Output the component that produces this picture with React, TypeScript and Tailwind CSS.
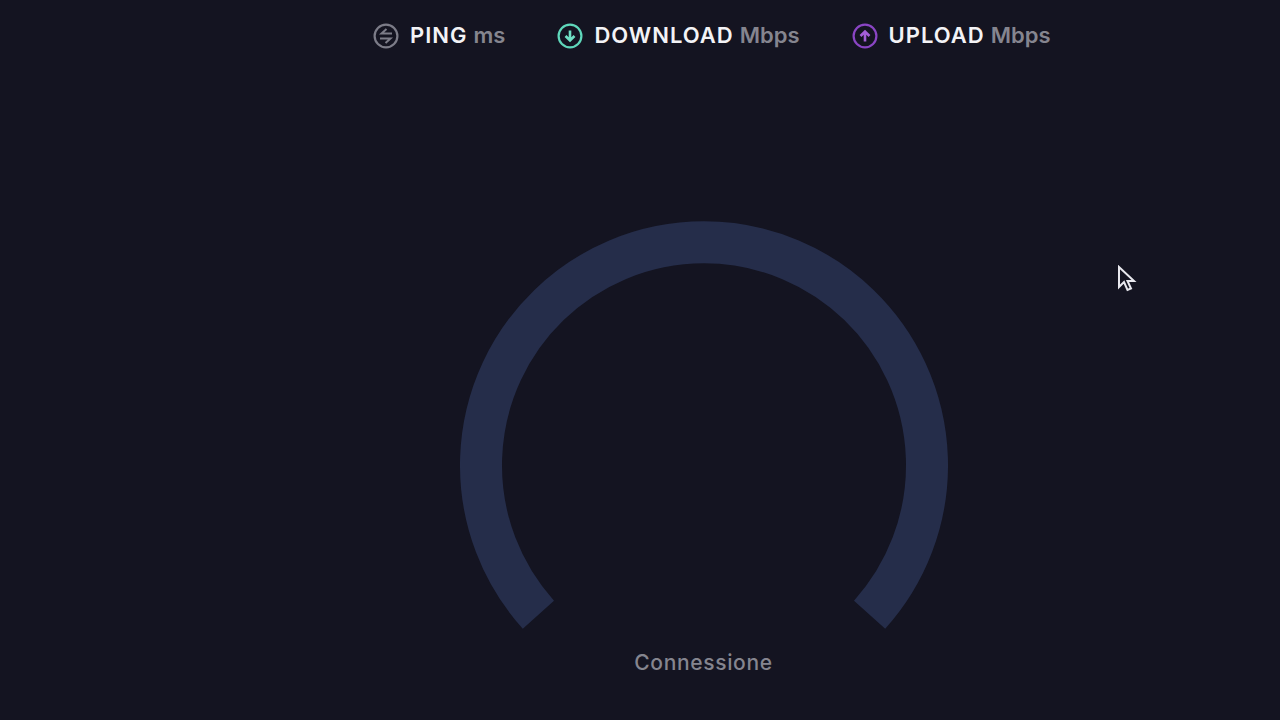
const font = "font-['Inter','Noto_Sans',sans-serif]";

function PingIcon() {
  return (
    <svg width="26" height="26" viewBox="0 0 26 26" fill="none" stroke="#7c7c88" strokeWidth="2.2">
      <circle cx="13" cy="13" r="11.4" />
      <path d="M19 10.5H8.5L13.5 6" strokeWidth="2" />
      <path d="M7 15.5h10.5L12.5 20" strokeWidth="2" />
    </svg>
  );
}

function ArrowIcon({ up, color, glyph }: { up?: boolean; color: string; glyph: string }) {
  return (
    <svg width="26" height="26" viewBox="0 0 26 26" fill="none" stroke={color} strokeWidth="2.2">
      <circle cx="13" cy="13" r="11.4" />
      {up ? (
        <path d="M13 18.5V9M8.5 13 13 8.5l4.5 4.5" stroke={glyph} strokeWidth="2.6" />
      ) : (
        <path d="M13 7.5V17M8.5 13l4.5 4.5 4.5-4.5" stroke={glyph} strokeWidth="2.6" />
      )}
    </svg>
  );
}

function Metric({ icon, label, unit }: { icon: React.ReactNode; label: string; unit: string }) {
  return (
    <div className="flex items-center gap-[11px]">
      {icon}
      <div className="-mt-px flex gap-[6px] text-[22px] leading-none font-semibold">
        <span className="tracking-[1px] text-[#f3f3f6]">{label}</span>
        <span className="text-[#85858f]">{unit}</span>
      </div>
    </div>
  );
}

export default function App() {
  return (
    <div className={`h-[720px] w-[1280px] overflow-hidden bg-[#141421] relative ${font}`}>
      <div className="flex h-[71px] items-center gap-[52px] pl-[373px]">
        <Metric icon={<PingIcon />} label="PING" unit="ms" />
        <Metric icon={<ArrowIcon color="#5fd8bb" glyph="#6fe0c4" />} label="DOWNLOAD" unit="Mbps" />
        <Metric icon={<ArrowIcon up color="#8a45c4" glyph="#a45fd8" />} label="UPLOAD" unit="Mbps" />
      </div>

      <div className="flex flex-col items-center pl-[128px] pt-[150px] w-[1280px]">
        <svg width="488" height="408" viewBox="0 0 488 408" fill="none">
          <path d="M 78.4 393.7 A 223 223 0 1 1 409.6 393.7" stroke="#252d4a" strokeWidth="42" />
        </svg>
        <div className="mt-[23px] -ml-px text-[21px] leading-none font-medium tracking-[0.65px] text-[#85858f]">Connessione</div>
      </div>

      <svg className="absolute left-[1117px] top-[265px]" width="20" height="28" viewBox="0 0 20 28" fill="#141421" stroke="#e8e8ee" strokeWidth="2">
        <path d="M2 2v20l5-5 3.5 8 3.5-1.5L10.5 16H17Z" />
      </svg>
    </div>
  );
}
